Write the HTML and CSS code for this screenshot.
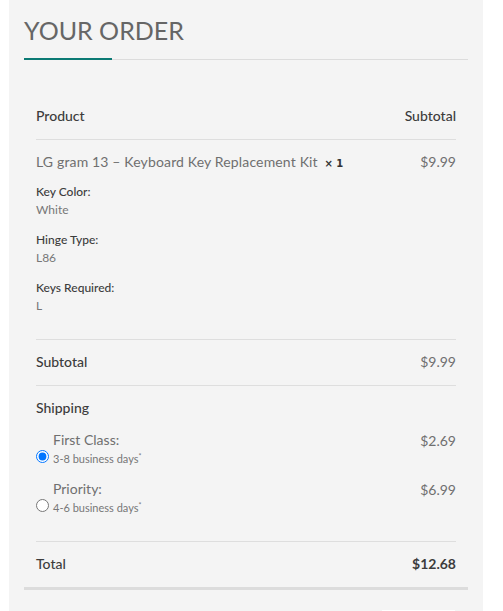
FILE: index.html
```html
<!DOCTYPE html>
<html lang="en">
<head>
<meta charset="utf-8">
<title>Your order</title>
<link rel="stylesheet" href="styles.css">
</head>
<body>
<div class="panel">
  <h3 class="title">YOUR ORDER</h3>
  <div class="title-rule"><span class="accent"></span></div>
  <div class="order-box">
    <div class="row head">
      <span class="label">Product</span>
      <span class="label">Subtotal</span>
    </div>
    <div class="row item">
      <div class="item-info">
        <div class="item-name">LG gram 13 – Keyboard Key Replacement Kit <strong class="qty">× 1</strong></div>
        <dl class="meta">
          <dt>Key Color:</dt><dd>White</dd>
          <dt>Hinge Type:</dt><dd>L86</dd>
          <dt>Keys Required:</dt><dd>L</dd>
        </dl>
      </div>
      <span class="price">$9.99</span>
    </div>
    <div class="row">
      <span class="label">Subtotal</span>
      <span class="price">$9.99</span>
    </div>
    <div class="row shipping">
      <div class="label">Shipping</div>
      <div class="option">
        <span class="opt-name">First Class:</span>
        <input class="opt-radio" type="radio" name="ship" id="ship1" checked>
        <label class="opt-days" for="ship1">3-8 business days<sup>*</sup></label>
        <span class="price opt-price">$2.69</span>
      </div>
      <div class="option">
        <span class="opt-name">Priority:</span>
        <input class="opt-radio" type="radio" name="ship" id="ship2">
        <label class="opt-days" for="ship2">4-6 business days<sup>*</sup></label>
        <span class="price opt-price">$6.99</span>
      </div>
    </div>
    <div class="row total">
      <span class="label">Total</span>
      <span class="label strong">$12.68</span>
    </div>
  </div>
  <div class="actions"><div class="btn"></div></div>
</div>
</body>
</html>
```
FILE: styles.css
```css
html, body {
  margin: 0;
  padding: 0;
  background: #ffffff;
}
body {
  font-family: "Lato", "Open Sans", sans-serif;
  color: #6f6f6f;
}
.panel {
  margin-left: 9px;
  width: 474px;
  height: 611px;
  box-sizing: border-box;
  background: #f4f4f4;
  padding: 0 15px;
  overflow: hidden;
}
.title {
  margin: 0;
  padding-top: 14px;
  font-size: 25px;
  line-height: 32px;
  font-weight: 400;
  color: #666666;
}
.title-rule {
  margin-top: 13px;
  height: 1px;
  background: #dcdcdc;
  position: relative;
}
.accent {
  position: absolute;
  left: 0;
  top: -1px;
  width: 88px;
  height: 2px;
  background: #0b7a74;
}
.order-box {
  margin-top: 34px;
  padding: 0 12px;
  border-bottom: 3px solid #dcdcdc;
}
.row {
  display: flex;
  justify-content: space-between;
  align-items: flex-start;
  padding: 12px 0 13px;
  font-size: 14px;
  line-height: 20px;
  border-bottom: 1px solid #dedede;
}
.row.total {
  border-bottom: none;
}
.label {
  color: #3c3c3c;
  font-weight: 500;
}
.strong {
  font-weight: 700;
}
.price {
  color: #6f6f6f;
  font-weight: 400;
}
.item {
  padding-bottom: 12px;
}
.item-name {
  height: 20px;
  font-weight: 400;
  color: #6f6f6f;
  letter-spacing: 0.15px;
}
.qty {
  font-family: "DejaVu Sans", sans-serif;
  font-size: 10px;
  line-height: 10px;
  font-weight: 700;
  color: #333333;
  margin-left: 3px;
  letter-spacing: 0;
}
.meta {
  margin: 11px 0 0;
  font-size: 12px;
  line-height: 18px;
}
.meta dt {
  color: #3c3c3c;
  font-weight: 500;
}
.meta dd {
  margin: 0 0 12px;
  color: #777777;
  font-weight: 400;
}
.shipping {
  display: block;
  padding-bottom: 25px;
}
.option {
  display: grid;
  grid-template-columns: 13px 1fr auto;
  grid-template-rows: 20px 17px;
  column-gap: 4px;
  margin-top: 12px;
}
.opt-name {
  grid-column: 2;
  grid-row: 1;
  color: #6f6f6f;
}
.opt-radio {
  grid-column: 1;
  grid-row: 2;
  width: 13px;
  height: 13px;
  margin: 0;
}
.opt-days {
  grid-column: 2;
  grid-row: 2;
  font-size: 11px;
  line-height: 17px;
  color: #777777;
}
.opt-days sup {
  font-size: 7px;
  vertical-align: 4px;
  line-height: 0;
}
.opt-price {
  grid-column: 3;
  grid-row: 1;
  padding-top: 1px;
}
.actions {
  display: flex;
  justify-content: flex-end;
  padding-right: 13px;
  margin-top: 20px;
}
.btn {
  width: 73px;
  height: 30px;
  background: #ffffff;
}
```
